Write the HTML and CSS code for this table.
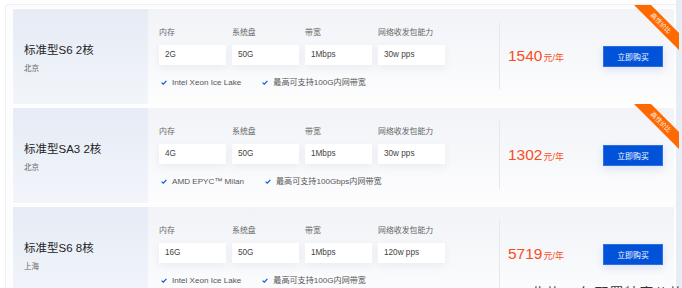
FILE: index.html
```html
<!DOCTYPE html>
<html lang="zh-CN">
<head>
<meta charset="utf-8">
<title>云服务器特惠</title>
<link rel="stylesheet" href="styles.css">
</head>
<body>
<div class="page">
  <div class="wrap">
    <div class="card">
      <div class="info">
        <div class="title">标准型S6 2核</div>
        <div class="region">北京</div>
      </div>
      <div class="specs">
        <div class="grid">
          <div class="col"><div class="lbl">内存</div><div class="box">2G</div></div>
          <div class="col"><div class="lbl">系统盘</div><div class="box">50G</div></div>
          <div class="col"><div class="lbl">带宽</div><div class="box">1Mbps</div></div>
          <div class="col"><div class="lbl">网络收发包能力</div><div class="box">30w pps</div></div>
        </div>
        <div class="feats">
          <span class="feat"><svg class="chk" viewBox="0 0 6 5" width="6" height="5"><path d="M0.6 2.6 L2.3 4.2 L5.4 0.8" fill="none" stroke="#0052d9" stroke-width="1.1"/></svg>Intel Xeon Ice Lake</span>
          <span class="feat"><svg class="chk" viewBox="0 0 6 5" width="6" height="5"><path d="M0.6 2.6 L2.3 4.2 L5.4 0.8" fill="none" stroke="#0052d9" stroke-width="1.1"/></svg>最高可支持100G内网带宽</span>
        </div>
      </div>
      <div class="buy">
        <div class="price"><span class="num">1540</span><span class="unit">元/年</span></div>
        <button class="btn">立即购买</button>
      </div>
      <div class="ribbon"><span class="ribbon-text">高性价比</span></div>
    </div>

    <div class="card">
      <div class="info">
        <div class="title">标准型SA3 2核</div>
        <div class="region">北京</div>
      </div>
      <div class="specs">
        <div class="grid">
          <div class="col"><div class="lbl">内存</div><div class="box">4G</div></div>
          <div class="col"><div class="lbl">系统盘</div><div class="box">50G</div></div>
          <div class="col"><div class="lbl">带宽</div><div class="box">1Mbps</div></div>
          <div class="col"><div class="lbl">网络收发包能力</div><div class="box">30w pps</div></div>
        </div>
        <div class="feats">
          <span class="feat"><svg class="chk" viewBox="0 0 6 5" width="6" height="5"><path d="M0.6 2.6 L2.3 4.2 L5.4 0.8" fill="none" stroke="#0052d9" stroke-width="1.1"/></svg>AMD EPYC™ Milan</span>
          <span class="feat"><svg class="chk" viewBox="0 0 6 5" width="6" height="5"><path d="M0.6 2.6 L2.3 4.2 L5.4 0.8" fill="none" stroke="#0052d9" stroke-width="1.1"/></svg>最高可支持100Gbps内网带宽</span>
        </div>
      </div>
      <div class="buy">
        <div class="price"><span class="num">1302</span><span class="unit">元/年</span></div>
        <button class="btn">立即购买</button>
      </div>
      <div class="ribbon"><span class="ribbon-text">高性价比</span></div>
    </div>

    <div class="card">
      <div class="info">
        <div class="title">标准型S6 8核</div>
        <div class="region">上海</div>
      </div>
      <div class="specs">
        <div class="grid">
          <div class="col"><div class="lbl">内存</div><div class="box">16G</div></div>
          <div class="col"><div class="lbl">系统盘</div><div class="box">50G</div></div>
          <div class="col"><div class="lbl">带宽</div><div class="box">1Mbps</div></div>
          <div class="col"><div class="lbl">网络收发包能力</div><div class="box">120w pps</div></div>
        </div>
        <div class="feats">
          <span class="feat"><svg class="chk" viewBox="0 0 6 5" width="6" height="5"><path d="M0.6 2.6 L2.3 4.2 L5.4 0.8" fill="none" stroke="#0052d9" stroke-width="1.1"/></svg>Intel Xeon Ice Lake</span>
          <span class="feat"><svg class="chk" viewBox="0 0 6 5" width="6" height="5"><path d="M0.6 2.6 L2.3 4.2 L5.4 0.8" fill="none" stroke="#0052d9" stroke-width="1.1"/></svg>最高可支持100G内网带宽</span>
        </div>
      </div>
      <div class="buy">
        <div class="price"><span class="num">5719</span><span class="unit">元/年</span></div>
        <button class="btn">立即购买</button>
      </div>
      <div class="overlay-text">此款 3 年配置特惠价格</div>
    </div>
  </div>
  <div class="side"></div>
</div>
</body>
</html>
```

FILE: styles.css
```css
* { box-sizing: border-box; }

html, body {
  margin: 0;
  padding: 0;
  background: #ffffff;
  height: 288px;
  overflow: hidden;
}

body {
  font-family: "Liberation Sans", "Noto Sans CJK SC", sans-serif;
  color: #333;
}

.page {
  display: flex;
  height: 288px;
}

.wrap {
  margin: 4px 0 0 5px;
  width: 671px;
  padding: 3px 0 0 6px;
  border-top: 1px solid #eef0f4;
  border-left: 1px solid #eef0f4;
  border-radius: 4px 0 0 0;
  background: #fdfdfe;
  display: flex;
  flex-direction: column;
  gap: 2px;
}

.side {
  flex: 1;
  background: #e8ecf4;
}

.card {
  position: relative;
  flex: none;
  width: 663px;
  height: 97px;
  border: 1px solid #ffffff;
  display: flex;
  background: linear-gradient(180deg, #f1f3f7 0%, #f8f9fb 60%, #fdfdfe 100%);
}

.info {
  width: 135px;
  flex: none;
  padding: 33px 0 0 11px;
  background: linear-gradient(180deg, #e6ebf5 0%, #edf1f8 60%, #f2f5fa 100%);
}

.title {
  font-size: 11.5px;
  line-height: 16px;
  color: #222;
}

.region {
  margin-top: 5px;
  font-size: 7.5px;
  line-height: 11px;
  color: #666;
}

.specs {
  flex: 1;
  padding: 17.5px 0 0 11px;
}

.grid {
  display: grid;
  grid-template-columns: repeat(4, 67px);
  column-gap: 6px;
}

.lbl {
  font-size: 7.9px;
  line-height: 11px;
  color: #666;
}

.box {
  margin-top: 7.5px;
  height: 20px;
  background: #ffffff;
  padding-left: 6px;
  font-size: 8.2px;
  line-height: 20px;
  color: #444;
  box-shadow: 0 3px 8px rgba(40, 70, 130, 0.07);
}

.feats {
  margin-top: 11.5px;
  display: flex;
  gap: 21px;
  padding-left: 2px;
}

.feat {
  display: inline-flex;
  align-items: center;
  font-size: 8.1px;
  line-height: 11px;
  color: #555;
}

.chk {
  margin-right: 5px;
  flex: none;
}

.buy {
  align-self: center;
  margin-top: -1px;
  width: 175px;
  height: 68px;
  flex: none;
  border-left: 1px solid #e6e8ec;
  display: flex;
  align-items: center;
  justify-content: space-between;
  padding: 0 11px 0 8px;
}

.price {
  color: #fa4d1b;
  white-space: nowrap;
}

.num {
  font-size: 15.5px;
  line-height: 18px;
}

.unit {
  font-size: 9px;
  margin-left: 1px;
}

.btn {
  width: 60px;
  height: 21px;
  border: 1px solid #2f6fe0;
  background: #0052d9;
  color: #ffffff;
  font-family: "Liberation Sans", "Noto Sans CJK SC", sans-serif;
  font-size: 7.9px;
  padding: 0;
  box-shadow: 0 3px 8px rgba(0, 60, 180, 0.12);
}

.ribbon {
  position: absolute;
  top: -4px;
  right: -5px;
  width: 45px;
  height: 45px;
  background: #ff6a00;
  clip-path: polygon(0 0, 17px 0, 100% 28px, 100% 100%);
}

.ribbon-text {
  position: absolute;
  left: 27px;
  top: 17.5px;
  transform: translate(-50%, -50%) rotate(45deg);
  font-size: 6.5px;
  line-height: 7px;
  color: #fff3ea;
  white-space: nowrap;
}

.overlay-text {
  position: absolute;
  left: 518px;
  top: 79px;
  font-size: 14px;
  line-height: 14px;
  letter-spacing: 1px;
  color: #333;
  white-space: nowrap;
}
```
